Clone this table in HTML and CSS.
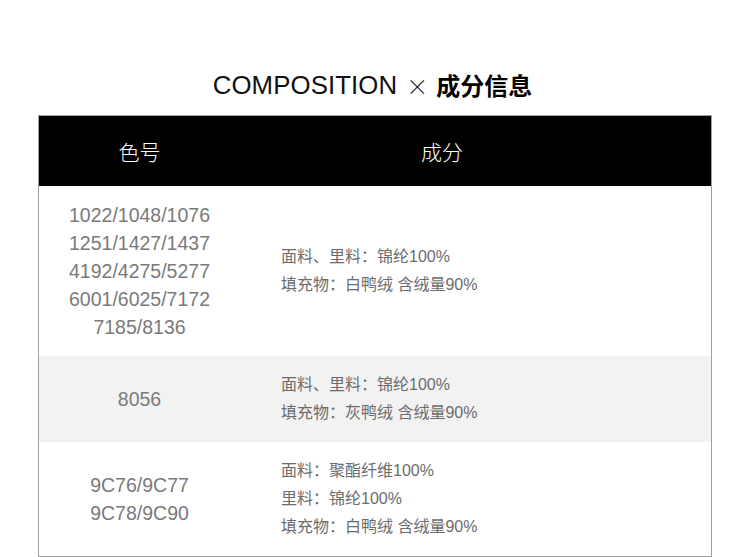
FILE: index.html
```html
<!DOCTYPE html>
<html lang="zh">
<head>
<meta charset="utf-8">
<title>Composition</title>
<link rel="stylesheet" href="styles.css">
</head>
<body>
<div class="title">
  <span class="en">COMPOSITION</span>
  <span class="x">×</span>
  <span class="cn">成分信息</span>
</div>
<div class="table">
  <div class="row head">
    <div class="c1">色号</div>
    <div class="c2">成分</div>
  </div>
  <div class="row">
    <div class="c1">1022/1048/1076<br>1251/1427/1437<br>4192/4275/5277<br>6001/6025/7172<br>7185/8136</div>
    <div class="c2">面料、里料：锦纶100%<br>填充物：白鸭绒 含绒量90%</div>
  </div>
  <div class="row gray">
    <div class="c1">8056</div>
    <div class="c2">面料、里料：锦纶100%<br>填充物：灰鸭绒 含绒量90%</div>
  </div>
  <div class="row">
    <div class="c1">9C76/9C77<br>9C78/9C90</div>
    <div class="c2">面料：聚酯纤维100%<br>里料：锦纶100%<br>填充物：白鸭绒 含绒量90%</div>
  </div>
</div>
</body>
</html>
```
FILE: styles.css
```css
html, body {
  margin: 0;
  padding: 0;
  background: #fff;
}
body {
  font-family: "Liberation Sans", "Noto Sans CJK SC", sans-serif;
}
.title {
  height: 40px;
  padding-top: 65px;
  margin-bottom: 10px;
  display: flex;
  justify-content: center;
  align-items: center;
  color: #111;
  line-height: 40px;
  padding-right: 5px;
}
.title .en {
  font-size: 25.8px;
  font-weight: normal;
  letter-spacing: 0.1px;
}
.title .x {
  font-family: "Noto Sans CJK SC", sans-serif;
  font-size: 22px;
  font-weight: 300;
  margin: 0 8px 0 9px;
}
.title .cn {
  font-family: "Noto Sans CJK SC", sans-serif;
  font-size: 24px;
  font-weight: bold;
  color: #000;
}
.table {
  margin-left: 38px;
  width: 672px;
  border: 1px solid #a0a0a0;
}
.row {
  display: flex;
  align-items: center;
  padding: 15px 0;
  line-height: 28px;
}
.row.gray {
  background: #f2f2f2;
}
.row.head {
  background: #000;
  color: #fff;
  height: 70px;
  padding: 0;
  font-family: "Noto Sans CJK SC", sans-serif;
}
.c1 {
  width: 201px;
  text-align: center;
  color: #7a7a7a;
  font-size: 19.5px;
}
.c2 {
  flex: 1;
  padding-left: 41px;
  color: #6c6c6c;
  font-size: 16px;
}
.row.head .c1,
.row.head .c2 {
  color: #fff;
  font-size: 21px;
  font-weight: 300;
}
.row.head .c2 {
  padding-left: 0;
  padding-right: 67px;
  text-align: center;
}
```
